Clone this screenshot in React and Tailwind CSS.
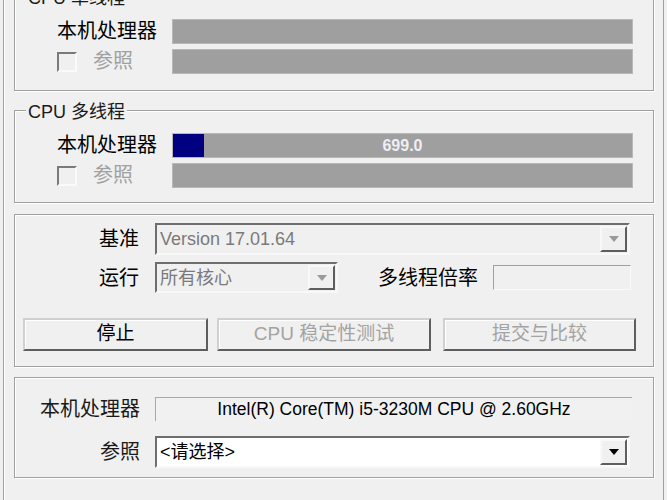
const font = { fontFamily: '"Liberation Sans", "Noto Sans CJK SC", sans-serif' }

function Group({ title, className, children }) {
  return (
    <div className={`relative shrink-0 border border-[#a0a0a0] shadow-[inset_1px_1px_0_#ffffff,1px_1px_0_#ffffff] ${className}`}>
      {title && (
        <span className="absolute left-[11px] top-[-10px] bg-[#f0f0f0] px-[2px] text-[18px] leading-[22px] text-[#1a1a1a]">
          {title}
        </span>
      )}
      {children}
    </div>
  )
}

function Arrow({ dark }) {
  return (
    <svg width="10" height="6" viewBox="0 0 10 6">
      <polygon points="0,0 10,0 5,6" fill={dark ? '#000000' : '#9a9a9a'} />
    </svg>
  )
}

function Combo({ width, height, text, white, dark }) {
  return (
    <div
      className={`flex items-stretch border-2 border-t-[#6e6e6e] border-l-[#6e6e6e] border-r-[#f8f8f8] border-b-[#f8f8f8] ${white ? 'bg-white' : 'bg-[#f0f0f0]'} ${width} ${height}`}
    >
      <span className={`flex-1 pl-[3px] pt-[1px] text-[18px] leading-[27px] ${dark ? 'text-black' : 'text-[#7a7a7a]'}`}>{text}</span>
      <div className="my-[1px] mr-[1px] flex w-[27px] items-center justify-center border-2 border-t-[#f8f8f8] border-l-[#f8f8f8] border-r-[#5e5e5e] border-b-[#5e5e5e] bg-[#f0f0f0]">
        <Arrow dark={dark} />
      </div>
    </div>
  )
}

function Button({ label, width, disabled }) {
  return (
    <div
      className={`flex h-[33px] items-center justify-center border-2 border-t-[#d0d0d0] border-l-[#d0d0d0] border-r-[#5e5e5e] border-b-[#5e5e5e] bg-[#f0f0f0] shadow-[inset_1px_1px_0_#ffffff] text-[19px] ${disabled ? 'text-[#a3a3a3]' : 'text-black'} ${width}`}
    >
      {label}
    </div>
  )
}

function BarRow({ label, fill, value }) {
  return (
    <div className="flex h-[25px] items-center">
      <div className="w-[157px] pl-[42px] text-[20px] leading-[25px] text-black">{label}</div>
      <div className="relative mr-[20px] flex h-full flex-1 border border-[#b8b8b8] bg-[#9f9f9f]">
        {fill && <div className="h-full w-[31px] bg-[#000080]" />}
        {value && (
          <span className="absolute inset-0 flex items-center justify-center text-[16px] font-bold text-[#eeeef4]">
            {value}
          </span>
        )}
      </div>
    </div>
  )
}

function RefRow() {
  return (
    <div className="flex h-[25px] items-center">
      <div className="flex w-[157px] items-center pl-[42px]">
        <div className="h-[20px] w-[20px] border-2 border-t-[#7a7a7a] border-l-[#7a7a7a] border-r-[#fafafa] border-b-[#fafafa] bg-[#f0f0f0]" />
        <span className="ml-[16px] text-[20px] leading-[25px] text-[#a0a0a0]">参照</span>
      </div>
      <div className="mr-[20px] h-full flex-1 border border-[#b8b8b8] bg-[#9f9f9f]" />
    </div>
  )
}

export default function App() {
  return (
    <div className="h-[500px] w-[667px] overflow-hidden bg-[#f0f0f0]" style={font}>
      <div className="ml-[3px] flex h-full w-[661px] flex-col border-x border-[#a0a0a0] pl-[10px] pr-[9px] shadow-[inset_1px_0_0_#ffffff]">
        <Group title="CPU 单线程" className="mt-[-4px] h-[95px]">
          <div className="flex flex-col gap-[5px] pt-[22px]">
            <BarRow label="本机处理器" />
            <RefRow />
          </div>
        </Group>

        <Group title="CPU 多线程" className="mt-[19px] h-[93px]">
          <div className="flex flex-col gap-[5px] pt-[22px]">
            <BarRow label="本机处理器" fill value="699.0" />
            <RefRow />
          </div>
        </Group>

        <Group className="mt-[11px] h-[153px]">
          <div className="flex flex-col pt-[8px]">
            <div className="flex items-center">
              <div className="w-[140px] pr-[16px] text-right text-[20px] text-black">基准</div>
              <Combo width="w-[475px]" height="h-[32px]" text="Version 17.01.64" />
            </div>
            <div className="mt-[7px] flex items-center">
              <div className="w-[140px] pr-[16px] text-right text-[20px] text-black">运行</div>
              <Combo width="w-[183px]" height="h-[31px]" text="所有核心" />
              <div className="ml-[40px] w-[115px] text-[20px] text-black">多线程倍率</div>
              <div className="h-[25px] w-[138px] border border-t-[#a0a0a0] border-l-[#a0a0a0] border-r-[#fafafa] border-b-[#fafafa] bg-[#f0f0f0]" />
            </div>
            <div className="mt-[25px] flex items-center pl-[8px]">
              <Button label="停止" width="w-[185px]" />
              <div className="ml-[9px]">
                <Button label="CPU 稳定性测试" width="w-[214px]" disabled />
              </div>
              <div className="ml-[12px]">
                <Button label="提交与比较" width="w-[193px]" disabled />
              </div>
            </div>
          </div>
        </Group>

        <Group className="mt-[10px] h-[101px]">
          <div className="flex flex-col pt-[16px]">
            <div className="flex items-center">
              <div className="w-[140px] pr-[15px] text-right text-[20px] text-[#1a1a1a]">本机处理器</div>
              <div className="flex h-[24px] w-[477px] items-center justify-center border-t border-l border-[#a8a8a8] bg-[#f1f1f1] text-[17.5px] text-black">
                Intel(R) Core(TM) i5-3230M CPU @ 2.60GHz
              </div>
            </div>
            <div className="mt-[12px] flex items-center">
              <div className="w-[140px] pr-[15px] text-right text-[20px] text-[#1a1a1a]">参照</div>
              <Combo width="w-[475px]" height="h-[32px]" text="<请选择>" white dark />
            </div>
          </div>
        </Group>
      </div>
    </div>
  )
}
